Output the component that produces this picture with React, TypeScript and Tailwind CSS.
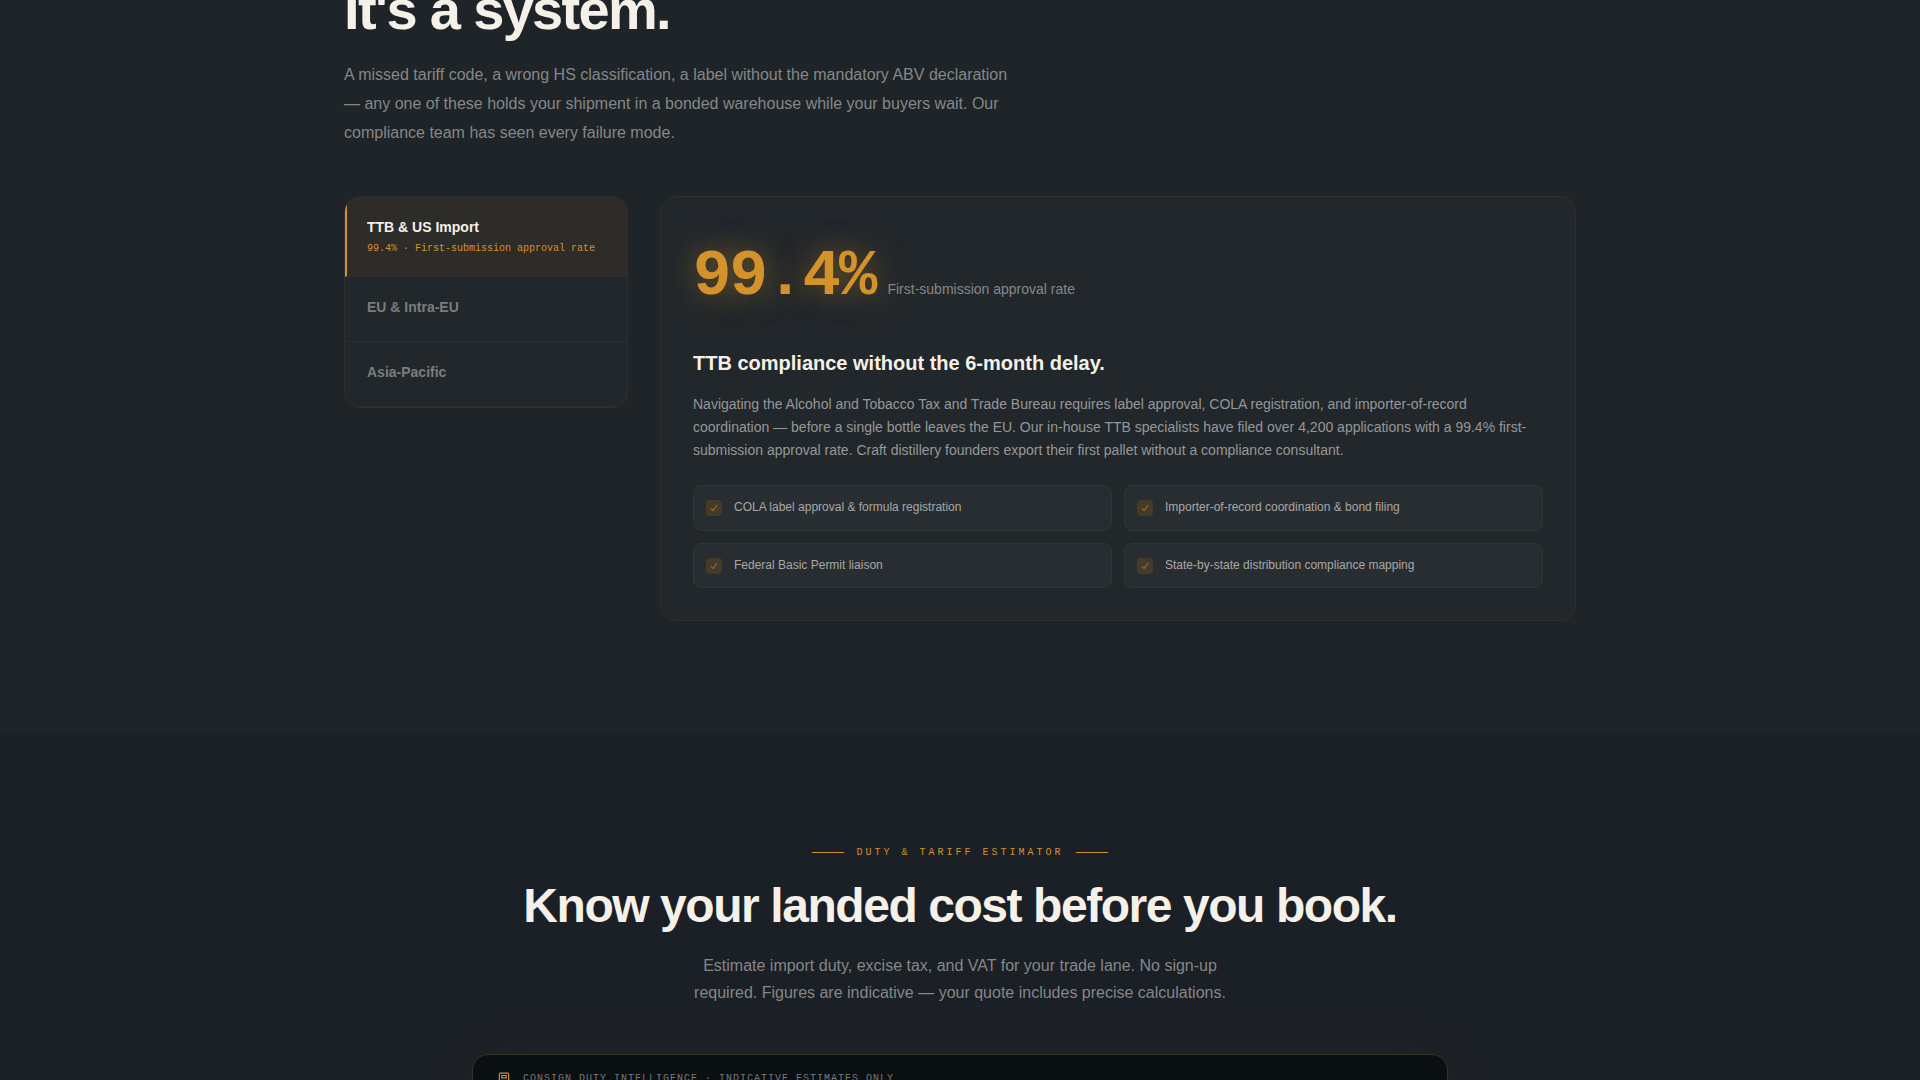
import { useState } from "react";
import clsx from "clsx";

const regions = [
  {
    id: "us",
    name: "TTB & US Import",
    stat: "99.4%",
    statLabel: "First-submission approval rate",
    title: "TTB compliance without the 6-month delay.",
    body: "Navigating the Alcohol and Tobacco Tax and Trade Bureau requires label approval, COLA registration, and importer-of-record coordination — before a single bottle leaves the EU. Our in-house TTB specialists have filed over 4,200 applications with a 99.4% first-submission approval rate. Craft distillery founders export their first pallet without a compliance consultant.",
    points: [
      "COLA label approval & formula registration",
      "Importer-of-record coordination & bond filing",
      "Federal Basic Permit liaison",
      "State-by-state distribution compliance mapping",
    ],
  },
  { id: "eu", name: "EU & Intra-EU" },
  { id: "apac", name: "Asia-Pacific" },
];

function CheckBadge() {
  return (
    <span className="mt-0.5 flex size-4 shrink-0 items-center justify-center rounded bg-[#443b29]">
      <svg width="8" height="8" viewBox="0 0 8 8" fill="none" aria-hidden="true">
        <path
          d="M1.2 4.6 3 6.6 6.8 1.4"
          stroke="#8f682c"
          strokeWidth="1.2"
          strokeLinecap="round"
          strokeLinejoin="round"
        />
      </svg>
    </span>
  );
}

function CalculatorIcon() {
  return (
    <svg
      width="14"
      height="14"
      viewBox="0 0 24 24"
      fill="none"
      stroke="#d4922a"
      strokeWidth="2"
      strokeLinecap="round"
      strokeLinejoin="round"
      aria-hidden="true"
    >
      <rect x="4" y="2" width="16" height="20" rx="2" />
      <rect x="8" y="6" width="8" height="4" />
      <path d="M8 14h.01M12 14h.01M16 14h.01M8 18h.01M12 18h.01M16 18h.01" />
    </svg>
  );
}

function Compliance() {
  const [active, setActive] = useState("us");
  const detail = regions[0];

  return (
    <section className="bg-[#1e2427] pb-28">
      <div className="mx-auto max-w-7xl px-6">
        <h2 className="-mt-5 text-[56px] leading-[60px] font-bold tracking-[-0.03em] text-[#f5f0e8]">
          It's a system.
        </h2>
        <p className="mt-5 max-w-[680px] text-base leading-[29px] text-[#868788]">
          A missed tariff code, a wrong HS classification, a label without the
          mandatory ABV declaration — any one of these holds your shipment in a
          bonded warehouse while your buyers wait. Our compliance team has seen
          every failure mode.
        </p>

        <div className="mt-[49px] flex items-start gap-8">
          <div className="w-71 shrink-0 overflow-hidden rounded-2xl border border-[#2c3033] bg-[#22272b]">
            {regions.map((region) => (
              <button
                key={region.id}
                type="button"
                onClick={() => setActive(region.id)}
                className={clsx(
                  "block w-full border-b border-l-2 border-b-[#2c3033] p-5 text-left",
                  active === region.id
                    ? "border-l-[#d4922a] bg-[#2d2c29]"
                    : "border-l-transparent"
                )}
              >
                <span
                  className={clsx(
                    "mb-1 block text-sm font-bold",
                    active === region.id ? "text-[#f5f0e8]" : "text-[#7a7c7d]"
                  )}
                >
                  {region.name}
                </span>
                {active === region.id && region.stat && (
                  <span className="block font-['Liberation_Mono',monospace] text-[10px] leading-[15px] text-[#d4922a]">
                    {region.stat} · {region.statLabel}
                  </span>
                )}
              </button>
            ))}
          </div>

          <div className="min-w-0 flex-1 rounded-2xl border border-[#2c3033] bg-[#22272b] p-8">
            <div className="flex items-baseline gap-3">
              <span className="font-['Liberation_Mono',monospace] text-[64px] leading-[96px] font-bold tracking-[-0.03em] text-[#d4922a] [text-shadow:0_0_30px_rgba(212,146,42,0.5)]">
                {detail.stat}
              </span>
              <span className="text-sm text-[#868788]">{detail.statLabel}</span>
            </div>
            <h3 className="mt-6 text-xl leading-7 font-bold text-[#f5f0e8]">
              {detail.title}
            </h3>
            <p className="mt-4 text-sm leading-relaxed text-[#969798]">
              {detail.body}
            </p>
            <ul className="mt-6 grid grid-cols-2 gap-3">
              {detail.points?.map((point) => (
                <li
                  key={point}
                  className="flex items-start gap-3 rounded-lg border border-[#303538] bg-[#282d31] p-3 text-xs leading-relaxed text-[#a9a8a6]"
                >
                  <CheckBadge />
                  {point}
                </li>
              ))}
            </ul>
          </div>
        </div>
      </div>
    </section>
  );
}

function Estimator() {
  return (
    <section className="bg-[#1b1f26] px-6 pt-28">
      <div className="mx-auto max-w-[976px]">
        <div className="flex items-center justify-center gap-3 font-['Liberation_Mono',monospace] text-[10px] leading-[15px] tracking-[0.3em] text-[#d4922a] uppercase">
          <span className="h-px w-8 bg-[#d4922a]" />
          Duty & Tariff Estimator
          <span className="h-px w-8 bg-[#d4922a]" />
        </div>
        <h2 className="mt-5 text-center text-5xl leading-[52px] font-bold tracking-[-0.03em] text-[#f5f0e8]">
          Know your landed cost before you book.
        </h2>
        <p className="mx-auto mt-5 max-w-[560px] text-center text-base leading-[27px] text-[#868788]">
          Estimate import duty, excise tax, and VAT for your trade lane. No
          sign-up required. Figures are indicative — your quote includes precise
          calculations.
        </p>

        <div className="mt-12 h-96 rounded-2xl border border-[#352f25] bg-[#0a0f12] shadow-[0_0_60px_rgba(180,150,42,0.05)]">
          <div className="flex items-center gap-3 px-6 py-4">
            <CalculatorIcon />
            <span className="font-['Liberation_Mono',monospace] text-[10px] leading-[15px] tracking-widest text-[#77797a] uppercase">
              Consign Duty Intelligence · Indicative estimates only
            </span>
          </div>
        </div>
      </div>
    </section>
  );
}

export default function App() {
  return (
    <main className="h-screen overflow-hidden bg-[#1b1f26] font-['Liberation_Sans',Arial,sans-serif]">
      <Compliance />
      <Estimator />
    </main>
  );
}
